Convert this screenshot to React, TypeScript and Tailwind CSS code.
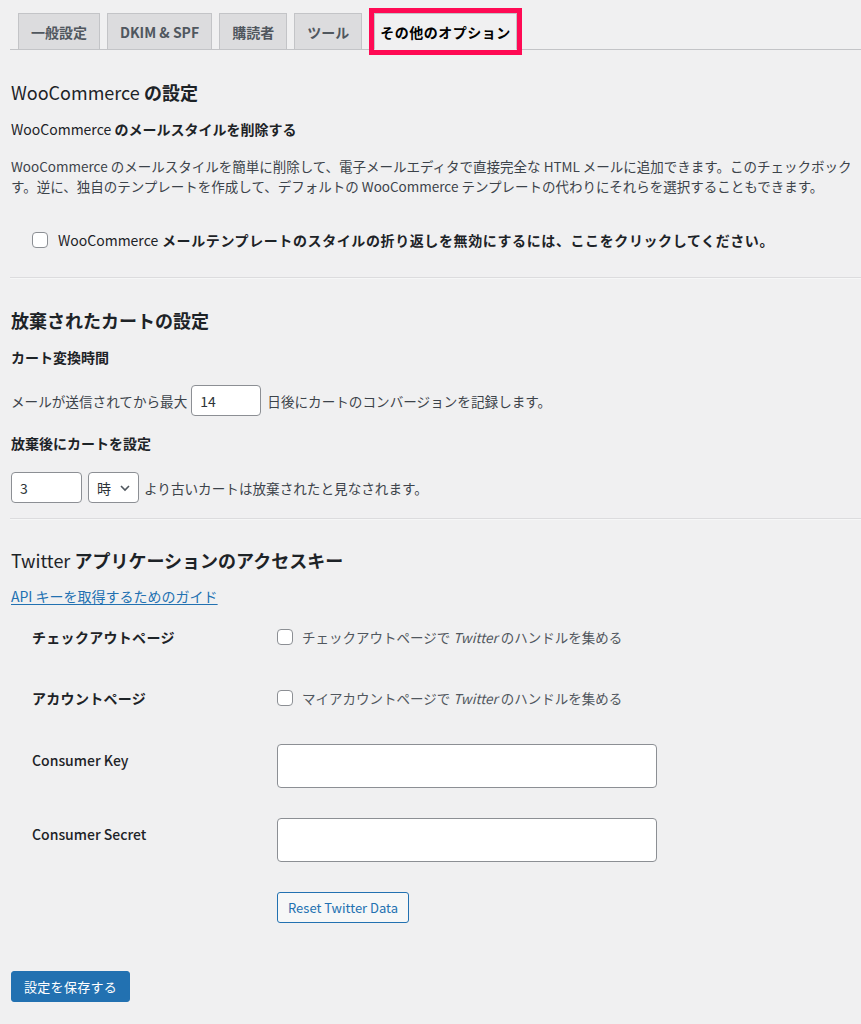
import { useState } from 'react';

const tabs = ['一般設定', 'DKIM & SPF', '購読者', 'ツール'];

const Checkbox = ({ checked, onChange }: { checked: boolean; onChange: () => void }) => (
  <button
    type="button"
    onClick={onChange}
    className="w-4 h-4 shrink-0 rounded-[4px] border border-[#8c8f94] bg-white flex items-center justify-center"
  >
    {checked && (
      <svg viewBox="0 0 16 16" className="w-4 h-4">
        <path d="M3.5 8.5l3 3 6-7" fill="none" stroke="#2271b1" strokeWidth="2" />
      </svg>
    )}
  </button>
);

export default function App() {
  const [noWrap, setNoWrap] = useState(false);
  const [checkout, setCheckout] = useState(false);
  const [account, setAccount] = useState(false);
  const [days, setDays] = useState('14');
  const [hours, setHours] = useState('3');

  return (
    <div
      className="w-[861px] min-h-screen overflow-hidden bg-[#f0f0f1] text-[#3c434a] text-[14px] leading-5"
      style={{ fontFamily: '"Noto Sans CJK JP", "Noto Sans", sans-serif' }}
    >
      {/* tabs */}
      <div className="ml-[10px] pt-[13px] border-b border-[#c3c4c7] flex">
        {tabs.map((t) => (
          <div
            key={t}
            className="ml-[7px] first:ml-2 -mb-px h-[37px] px-3 flex items-center border border-[#c3c4c7] bg-[#dcdcde] text-[#50575e] font-semibold whitespace-nowrap"
          >
            {t}
          </div>
        ))}
        <div className="ml-[12px] -mb-px h-[37px] px-[5px] flex items-center border border-[#c3c4c7] border-b-[#f0f0f1] bg-[#f0f0f1] text-black font-bold whitespace-nowrap outline-[5px] outline-solid outline-[#ff0a54] tracking-[0.5px]">
          その他のオプション
        </div>
      </div>

      <div className="px-[11px]">
        <h2 className="mt-[30px] text-[18px] leading-6 font-semibold text-[#1d2327]">
          <span className="font-normal">WooCommerce</span> の設定
        </h2>
        <h4 className="mt-[15px] font-semibold text-[#1d2327]">
          <span className="font-normal">WooCommerce</span> のメールスタイルを削除する
        </h4>
        {/* the first line runs past the window, as in the original page */}
        <div className="mt-[17px] w-[839px] overflow-hidden">
          <p className="whitespace-nowrap text-[13.5px]">
            WooCommerce のメールスタイルを簡単に削除して、電子メールエディタで直接完全な HTML メールに追加できます。このチェックボックス
            <br />
            す。逆に、独自のテンプレートを作成して、デフォルトの WooCommerce テンプレートの代わりにそれらを選択することもできます。
          </p>
        </div>
        <label className="mt-[34px] pl-[21px] flex items-center gap-[10px] h-5 font-semibold text-[#1d2327] whitespace-nowrap tracking-[0.6px]">
          <Checkbox checked={noWrap} onChange={() => setNoWrap(!noWrap)} />
          <span>
            <span className="font-normal tracking-normal">WooCommerce</span> メールテンプレートのスタイルの折り返しを無効にするには、ここをクリックしてください。
          </span>
        </label>
      </div>

      <hr className="mt-[27px] ml-[10px] border-0 border-t border-t-[#dcdcde] border-b border-b-[#f6f7f7]" />

      <div className="px-[11px]">
        <h2 className="mt-[29px] text-[18px] leading-6 font-semibold text-[#1d2327]">放棄されたカートの設定</h2>
        <h4 className="mt-[15px] font-semibold text-[#1d2327]">カート変換時間</h4>
        <div className="mt-[18px] flex items-center h-[31px] whitespace-nowrap">
          <span className="text-[13.6px]">メールが送信されてから最大</span>
          <input
            value={days}
            onChange={(e) => setDays(e.target.value)}
            className="ml-[4px] w-[70px] h-[31px] px-2 rounded-[4px] border border-[#8c8f94] bg-white text-[#2c3338] outline-none"
          />
          <span className="ml-[6px] text-[13.6px]">日後にカートのコンバージョンを記録します。</span>
        </div>
        <h4 className="mt-[17px] font-semibold text-[#1d2327]">放棄後にカートを設定</h4>
        <div className="mt-[19px] flex items-center h-[31px] whitespace-nowrap">
          <input
            value={hours}
            onChange={(e) => setHours(e.target.value)}
            className="w-[71px] h-[31px] px-2 rounded-[4px] border border-[#8c8f94] bg-white text-[#2c3338] outline-none"
          />
          <div className="ml-[6px] w-[51px] h-[31px] pl-2 pr-[7px] rounded-[4px] border border-[#8c8f94] bg-white text-[#2c3338] flex items-center justify-between">
            <span>時</span>
            <svg viewBox="0 0 12 12" className="w-3 h-3">
              <path d="M2 4l4 4 4-4" fill="none" stroke="#50575e" strokeWidth="1.6" />
            </svg>
          </div>
          <span className="ml-[5px] text-[13.6px]">より古いカートは放棄されたと見なされます。</span>
        </div>
      </div>

      <hr className="mt-[15px] ml-[10px] border-0 border-t border-t-[#dcdcde] border-b border-b-[#f6f7f7]" />

      <div className="px-[11px]">
        <h2 className="mt-[28px] text-[18px] leading-6 font-semibold text-[#1d2327]">
          <span className="font-normal">Twitter</span> アプリケーションのアクセスキー
        </h2>
        <a href="#" className="mt-[14px] inline-block text-[#2271b1] underline underline-offset-2">
          API キーを取得するためのガイド
        </a>

        <div className="pl-[21px] grid grid-cols-[245px_1fr] items-start">
          <div className="mt-[21px] font-semibold text-[#1d2327] tracking-[0.3px]">チェックアウトページ</div>
          <label className="mt-[21px] flex items-center gap-[9px] h-5 whitespace-nowrap text-[13.5px] text-[#50575e]">
            <Checkbox checked={checkout} onChange={() => setCheckout(!checkout)} />
            <span>
              チェックアウトページで <i>Twitter</i> のハンドルを集める
            </span>
          </label>

          <div className="mt-[41px] font-semibold text-[#1d2327] tracking-[0.3px]">アカウントページ</div>
          <label className="mt-[41px] flex items-center gap-[9px] h-5 whitespace-nowrap text-[13.5px] text-[#50575e]">
            <Checkbox checked={account} onChange={() => setAccount(!account)} />
            <span>
              マイアカウントページで <i>Twitter</i> のハンドルを集める
            </span>
          </label>

          <div className="mt-[42px] text-[#1d2327] font-medium">Consumer Key</div>
          <input className="mt-[36px] w-[380px] h-[44px] px-2 rounded-[4px] border border-[#8c8f94] bg-white outline-none" />

          <div className="mt-[36px] text-[#1d2327] font-medium">Consumer Secret</div>
          <input className="mt-[30px] w-[380px] h-[44px] px-2 rounded-[4px] border border-[#8c8f94] bg-white outline-none" />

          <div />
          <div className="mt-[30px]">
            <button
              type="button"
              className="h-[31px] px-[10px] rounded-[3px] border border-[#2271b1] bg-[#f6f7f7] text-[#2271b1] text-[13px]"
            >
              Reset Twitter Data
            </button>
          </div>
        </div>

        <button
          type="button"
          className="mt-[48px] h-[31px] px-[12px] rounded-[3px] bg-[#2271b1] border border-[#2271b1] text-white text-[13px] tracking-[0.3px]"
        >
          設定を保存する
        </button>
      </div>
    </div>
  );
}
